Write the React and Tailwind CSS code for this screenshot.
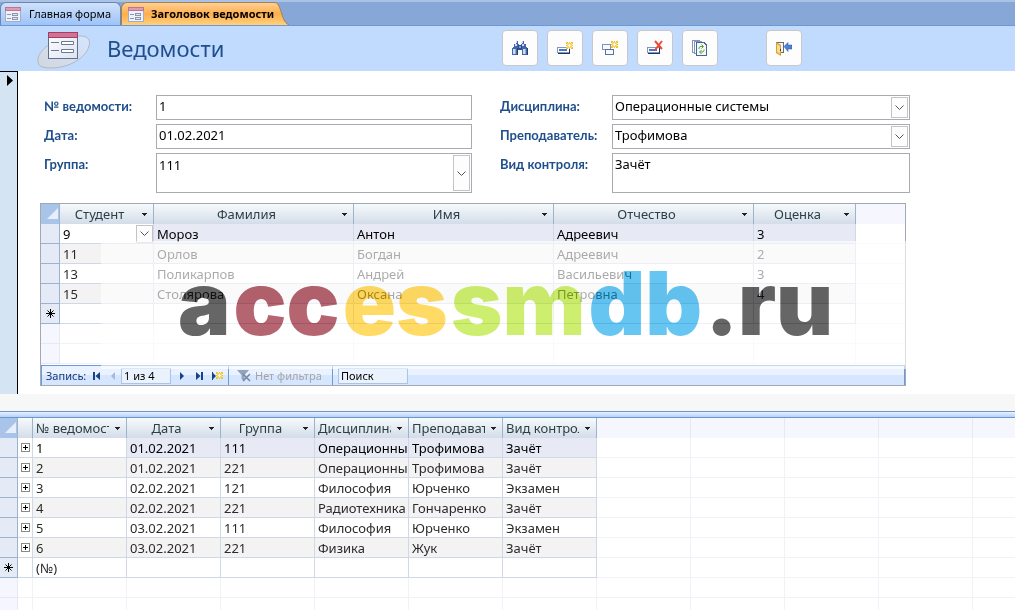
import { clsx } from 'clsx'

const students = [
  { id: '9', last: 'Мороз', first: 'Антон', middle: 'Адреевич', grade: '3' },
  { id: '11', last: 'Орлов', first: 'Богдан', middle: 'Адреевич', grade: '2' },
  { id: '13', last: 'Поликарпов', first: 'Андрей', middle: 'Васильевич', grade: '3' },
  { id: '15', last: 'Столярова', first: 'Оксана', middle: 'Петровна', grade: '4' },
]

const sheets = [
  ['1', '01.02.2021', '111', 'Операционные системы', 'Трофимова', 'Зачёт'],
  ['2', '01.02.2021', '221', 'Операционные системы', 'Трофимова', 'Зачёт'],
  ['3', '02.02.2021', '121', 'Философия', 'Юрченко', 'Экзамен'],
  ['4', '02.02.2021', '221', 'Радиотехника', 'Гончаренко', 'Зачёт'],
  ['5', '03.02.2021', '111', 'Философия', 'Юрченко', 'Экзамен'],
  ['6', '03.02.2021', '221', 'Физика', 'Жук', 'Зачёт'],
]

const sheetColumns = ['№ ведомости', 'Дата', 'Группа', 'Дисциплина', 'Преподаватель', 'Вид контроля']

function FormIcon() {
  return (
    <svg width="16" height="15" viewBox="0 0 16 15" shapeRendering="crispEdges" className="shrink-0" aria-hidden="true">
      <rect x="0" y="0" width="16" height="15" fill="#a3adc6" />
      <rect x="1" y="4" width="14" height="10" fill="#eef1f8" />
      <rect x="0" y="0" width="16" height="4" fill="#c0748f" />
      <rect x="1" y="1" width="14" height="2" fill="#dc9db2" />
      <path d="M2 7h4v1H2zM2 11h4v1H2z" fill="#8d96b0" />
      <path d="M7 6h6v3H7zM7 10h6v3H7z" fill="#8d96b0" />
      <path d="M8 7h4v1H8zM8 11h4v1H8z" fill="#dfe5f2" />
    </svg>
  )
}

function LogoIcon() {
  return (
    <svg width="56" height="37" viewBox="0 0 56 37" className="mt-1" aria-hidden="true">
      <defs>
        <linearGradient id="disc" x1="0" y1="1" x2="1" y2="0">
          <stop offset="0" stopColor="#d3d6dc" />
          <stop offset="1" stopColor="#d4e6ff" />
        </linearGradient>
        <linearGradient id="sheet" x1="0" y1="0" x2="1" y2="1">
          <stop offset="0" stopColor="#ffffff" />
          <stop offset="1" stopColor="#dde3f0" />
        </linearGradient>
      </defs>
      <path
        d="M1 29C0 20 15 5 40 4c11-1 14 4 12 10-3 12-20 22-38 22C5 36 1 34 1 29z"
        fill="url(#disc)"
        stroke="#b3b8c2"
      />
      <rect x="11.5" y="0.5" width="29" height="26" fill="url(#sheet)" stroke="#5f6f92" />
      <rect x="11" y="0" width="30" height="6" fill="#a23f66" />
      <rect x="12" y="1" width="28" height="4" fill="#d27396" />
      <path d="M14 10.5h8M14 18.5h8" stroke="#6c7896" />
      <path d="M24.500 9.500h12v3h-12zM24.500 17.500h12v3h-12z" fill="#fff" stroke="#6c7896" />
    </svg>
  )
}

function Spark({ x = 0, y = 0 }) {
  return (
    <g transform={`translate(${x} ${y})`}>
      <path d="M3 0h1v7H3zM0 3h7v1H0zM0 0h2v2H0zM5 0h2v2H5zM0 5h2v2H0zM5 5h2v2H5z" fill="#eec02f" />
      <path d="M1 1h5v5H1z" fill="#f6d65c" />
      <path d="M3 2h1v3H3zM2 3h3v1H2z" fill="#fffbe0" />
    </g>
  )
}

function RecordBar() {
  return (
    <>
      <path d="M0 7h13v6H0z" fill="#8796b3" />
      <path d="M1 8h11v4H1z" fill="#fff" />
      <path d="M2 9h8v2H2z" fill="#3f78d8" />
      <path d="M12 7h1v6H12zM1 13h12v1H1z" fill="#1f3768" />
    </>
  )
}

const icons = {
  find: (
    <>
      <path d="M4 1h2v3H4zM10 1h2v3H10zM2 4h5v3H2zM9 4h5v3H9zM0 8h6v7H0zM1 7h5v1H1zM10 8h6v7H10zM10 7h5v1H10z" fill="#4468a6" />
      <path d="M6 5h4v5H6z" fill="#2c4f8f" />
      <path d="M7 6h2v2H7z" fill="#7f9fd0" />
      <path d="M4 1h1v2H4zM10 1h1v2h-1zM3 4h2v2H3zM10 4h2v2h-2zM1 9h2v5H1zM11 9h2v5H11z" fill="#cbdcf4" />
      <path d="M3 9h1v5H3zM13 9h1v5H13z" fill="#8dadde" />
      <path d="M5 8h1v7H5zM15 8h1v7H15z" fill="#23427c" />
    </>
  ),
  add: (
    <>
      <RecordBar />
      <Spark x={9} y={2} />
    </>
  ),
  duplicate: (
    <>
      <path d="M0 4h9v6H0z" fill="#7d93b5" />
      <path d="M1 5h7v4H1z" fill="#f6f9ff" />
      <path d="M3 9h9v6H3z" fill="#5b7399" />
      <path d="M4 10h7v4H4z" fill="#f6f9ff" />
      <Spark x={9} y={1} />
    </>
  ),
  remove: (
    <>
      <RecordBar />
      <path d="M8 1l7 8M15 1L8 10" stroke="#f04a34" strokeWidth="2" shapeRendering="auto" />
    </>
  ),
  refresh: (
    <>
      <path d="M0 0h8v13H0z" fill="#8296b8" />
      <path d="M1 1h7v11H1z" fill="#fff" />
      <path d="M2 1h8v13H2z" fill="#8296b8" />
      <path d="M3 2h7v11H3z" fill="#fff" />
      <path d="M4 2h8l3 3v11H4z" fill="#4a6491" />
      <path d="M5 3h6l3 3v9H5z" fill="#f3f7fd" />
      <path d="M7 9V8l1-1.500h3M9.500 4.500l2 2-2 2M12 9.500v1L11 12H8M9.500 10l-2 2 2 2" fill="none" stroke="#5fa32c" shapeRendering="auto" />
    </>
  ),
  exit: (
    <>
      <path d="M0 2h8v11H0z" fill="#6b6b6b" />
      <path d="M1 3h6v9H1z" fill="#f3f6fb" />
      <path d="M0 2l5 3v11l-5-3z" fill="#d89f36" shapeRendering="auto" />
      <path d="M1 4l3 2v8l-3-2z" fill="#f8dc8e" shapeRendering="auto" />
      <path d="M4 9h1v2H4z" fill="#5c4210" />
      <path d="M8 6.500L12 2.500v2.500h4v4h-4v2.500z" fill="#4b82da" stroke="#2552a4" strokeWidth="0.500" shapeRendering="auto" />
    </>
  ),
}

const commands = [
  { icon: 'find', label: 'Найти' },
  { icon: 'add', label: 'Добавить запись' },
  { icon: 'duplicate', label: 'Дублировать запись' },
  { icon: 'remove', label: 'Удалить запись' },
  { icon: 'refresh', label: 'Обновить' },
]

function ToolButton({ icon, label }) {
  return (
    <button
      type="button"
      aria-label={label}
      className="flex size-9 items-center justify-center rounded-[4px] border border-[#c8c8cc] bg-[#fdfdfd]"
    >
      <svg width="16" height="16" viewBox="0 0 16 16" shapeRendering="crispEdges" aria-hidden="true">
        {icons[icon]}
      </svg>
    </button>
  )
}

function Chevron() {
  return (
    <svg width="9" height="5" viewBox="0 0 9 5" fill="none" stroke="#555" aria-hidden="true">
      <path d="M0.500 0.500l4 4 4-4" />
    </svg>
  )
}

function DropMark() {
  return (
    <svg width="5" height="3" viewBox="0 0 5 3" shapeRendering="crispEdges" className="shrink-0" aria-hidden="true">
      <path d="M0 0h5v1H0zM1 1h3v1H1zM2 2h1v1H2z" fill="#222" />
    </svg>
  )
}

function Field({ id, label, value, tall, list, multiline }) {
  const box = clsx(
    'block w-full resize-none appearance-none border border-[#a9abb0] bg-white px-0.5 leading-4 text-black outline-none',
    tall ? 'h-10' : 'h-[25px] pb-1',
    tall && (multiline ? 'pt-0.5' : 'pb-4'),
  )
  return (
    <div className="flex items-start">
      <label htmlFor={id} className="w-28 shrink-0 pt-0.5 font-['Lato',sans-serif] leading-[18px] font-bold text-[#1f4e8c]">
        {label}
      </label>
      <div className="relative flex-1">
        {list && (
          <select id={id} className={box} defaultValue={value}>
            <option>{value}</option>
          </select>
        )}
        {multiline && <textarea id={id} className={box} defaultValue={value} />}
        {!list && !multiline && <input id={id} type="text" className={box} defaultValue={value} />}
        {list && (
          <span className="pointer-events-none absolute inset-y-0.5 right-0.5 flex w-[17px] items-center justify-center border border-[#c4c4c8] bg-[#fdfdfd]">
            <Chevron />
          </span>
        )}
      </div>
    </div>
  )
}

function HeadCell({ children }) {
  return (
    <th className="border-r border-[#9db3cb] bg-linear-to-b from-[#f6fafb] to-[#d3dce9] p-0 font-normal">
      <div className="flex h-5 items-center gap-1.5 pr-1.5 pl-[3px]">
        <span className="flex-1 overflow-hidden text-center whitespace-nowrap text-[#2b3f46]">{children}</span>
        <DropMark />
      </div>
    </th>
  )
}

function CornerCell() {
  return (
    <th className="border-r border-[#9db3cb] bg-[#a9c4e9] p-0">
      <svg width="12" height="12" viewBox="0 0 12 12" className="ml-auto" aria-hidden="true">
        <path d="M11 0v11H0z" fill="#e6effb" />
      </svg>
    </th>
  )
}

function Star() {
  return (
    <svg width="9" height="9" viewBox="0 0 9 9" stroke="#000" className="mx-auto" aria-hidden="true">
      <path d="M4.500 0v9M0 4.500h9M1.500 1.500l6 6M7.500 1.500l-6 6" />
    </svg>
  )
}

const rowHead = 'h-5 border-r border-b border-[#9db3cb] bg-[#e4ebf6] p-0'
const emptyHead = 'h-5 border-r border-b border-[#e6e9f4] bg-[#f6f7fe] p-0'
const cell = 'h-5 overflow-hidden border-r border-b border-[#d0d7e5] p-0 pl-[3px] whitespace-nowrap'
const emptyCell = 'h-5 border-r border-b border-[#f1f2f7] p-0'

function StudentsGrid() {
  return (
    <table className="w-full table-fixed border-separate border-spacing-0 text-[#2b2b2b]">
      <colgroup>
        <col className="w-[19px]" />
        <col className="w-[94px]" />
        <col className="w-[200px]" />
        <col className="w-[200px]" />
        <col className="w-[200px]" />
        <col className="w-[102px]" />
        <col />
      </colgroup>
      <thead>
        <tr>
          <CornerCell />
          <HeadCell>Студент</HeadCell>
          <HeadCell>Фамилия</HeadCell>
          <HeadCell>Имя</HeadCell>
          <HeadCell>Отчество</HeadCell>
          <HeadCell>Оценка</HeadCell>
          <td className="bg-[#f6f7fe]" />
        </tr>
      </thead>
      <tbody>
        {students.map((s, i) => {
          const tone = i === 0 ? 'bg-[#e7eaf5] text-black' : i % 2 ? 'bg-[#f3f3f3]' : 'bg-white'
          return (
            <tr key={s.id}>
              <th className={rowHead} />
              <td className={clsx(cell, i === 0 ? 'bg-white text-black' : tone)}>
                {i === 0 ? (
                  <div className="relative">
                    <select aria-label="Студент" defaultValue={s.id} className="block w-full appearance-none outline-none">
                      <option>{s.id}</option>
                    </select>
                    <span className="pointer-events-none absolute inset-y-0 right-0 flex w-[17px] items-center justify-center border border-[#c4c4c8] bg-[#fdfdfd]">
                      <Chevron />
                    </span>
                  </div>
                ) : (
                  s.id
                )}
              </td>
              <td className={clsx(cell, tone)}>{s.last}</td>
              <td className={clsx(cell, tone)}>{s.first}</td>
              <td className={clsx(cell, tone)}>{s.middle}</td>
              <td className={clsx(cell, tone)}>{s.grade}</td>
              <td className={clsx(emptyCell, 'border-r-0')} />
            </tr>
          )
        })}
        <tr>
          <th className={rowHead}>
            <Star />
          </th>
          {[0, 1, 2, 3, 4].map((c) => (
            <td key={c} className={cell} />
          ))}
          <td className={clsx(emptyCell, 'border-r-0')} />
        </tr>
        {[0, 1].map((r) => (
          <tr key={r}>
            <th className={emptyHead} />
            {[0, 1, 2, 3, 4].map((c) => (
              <td key={c} className={emptyCell} />
            ))}
            <td className={clsx(emptyCell, 'border-r-0')} />
          </tr>
        ))}
      </tbody>
    </table>
  )
}

function NavButton({ label, children, className, disabled }) {
  return (
    <button type="button" aria-label={label} disabled={disabled} className={clsx('flex h-full items-center justify-center', className)}>
      {children}
    </button>
  )
}

function RecordNavigator() {
  return (
    <div className="flex h-5 items-center border border-b-0 border-[#6b9ad4] bg-linear-to-b from-[#e9f2fe] from-50% to-[#d5e6fe] to-50% text-[11px] leading-4 text-[#15387a]">
      <span className="w-[46px] shrink-0 pl-1">Запись:</span>
      <NavButton label="Первая запись" className="w-4">
        <svg width="7" height="8" viewBox="0 0 7 8" fill="#15428b">
          <path d="M0 0h2v8H0zM7 0v8L2.500 4z" />
        </svg>
      </NavButton>
      <NavButton label="Предыдущая запись" className="w-[17px]" disabled>
        <svg width="4" height="8" viewBox="0 0 4 8" fill="#a3b9dd">
          <path d="M4 0v8L0 4z" />
        </svg>
      </NavButton>
      <input
        type="text"
        aria-label="Текущая запись"
        defaultValue="1 из 4"
        className="h-4 w-[50px] border border-[#a9c3e6] bg-[#eaf2fd] px-0.5 text-black outline-none"
      />
      <NavButton label="Следующая запись" className="w-[21px]">
        <svg width="4" height="8" viewBox="0 0 4 8" fill="#15428b">
          <path d="M0 0v8l4-4z" />
        </svg>
      </NavButton>
      <NavButton label="Последняя запись" className="w-3.5">
        <svg width="7" height="8" viewBox="0 0 7 8" fill="#15428b">
          <path d="M5 0h2v8H5zM0 0v8l4.500-4z" />
        </svg>
      </NavButton>
      <NavButton label="Новая запись" className="w-[22px]">
        <svg width="11" height="8" viewBox="0 0 11 8" fill="#15428b">
          <path d="M0 0h1v8H0zM1 1v6l3-3z" />
          <Spark x={4} y={0} />
        </svg>
      </NavButton>
      <button type="button" disabled className="flex h-full w-[105px] items-center gap-1 border-x border-[#6b9ad4] pl-2 whitespace-nowrap text-[#a5a5a5]">
        <svg width="14" height="12" viewBox="0 0 14 12" aria-hidden="true">
          <path d="M0 0h12L7.500 5v6l-3-2V5z" fill="#93a3bd" />
          <path d="M6 4l7 7M13 4l-7 7" stroke="#76869f" strokeWidth="1.500" />
        </svg>
        Нет фильтра
      </button>
      <input
        type="text"
        aria-label="Поиск"
        defaultValue="Поиск"
        className="ml-[5px] h-4 w-[70px] border border-[#a9c3e6] bg-[#eaf2fd] px-0.5 text-black outline-none"
      />
    </div>
  )
}

// The wordmark is blended by difference, so each colour is the inverse of the one seen on white.
function Watermark() {
  return (
    <>
      <div className="pointer-events-none absolute top-[37px] -right-px left-[60px] h-32 bg-white/60" />
      <p className="pointer-events-none absolute top-[53px] left-[137px] flex gap-[3px] font-['Inter','DejaVu_Sans',sans-serif] text-[88px] leading-[92px] font-black text-[#999] mix-blend-difference">
        <span>a</span>
        <span className="text-[#4a9a8f]">cc</span>
        <span className="text-[#002499]">es</span>
        <span className="text-[#321191]">sm</span>
        <span className="text-[#993a0e]">db</span>
        <span>.ru</span>
      </p>
    </>
  )
}

function Subform() {
  return (
    <div className="relative mt-2.5 max-w-[866px] border border-[#a3a9b3] leading-[18px]">
      <StudentsGrid />
      <div className="h-px" />
      <RecordNavigator />
      <Watermark />
    </div>
  )
}

function ExpandBox({ label }) {
  return (
    <button type="button" aria-label={label} className="mx-auto flex size-[9px] items-center justify-center border border-[#8a8a8a] bg-white">
      <svg width="5" height="5" viewBox="0 0 5 5" shapeRendering="crispEdges" aria-hidden="true">
        <path d="M2 0h1v5H2zM0 2h5v1H0z" fill="#000" />
      </svg>
    </button>
  )
}

function SheetsGrid() {
  const spare = [0, 1, 2, 3, 4]
  return (
    <table className="w-full table-fixed border-separate border-spacing-0 font-['Noto_Sans',sans-serif] text-[13px] leading-[18px] text-[#2b2b2b]">
      <colgroup>
        <col className="w-[18px]" />
        <col className="w-[15px]" />
        {sheetColumns.map((c) => (
          <col key={c} className="w-[94px]" />
        ))}
        {spare.map((c) => (
          <col key={c} className={c < 4 ? 'w-[94px]' : ''} />
        ))}
      </colgroup>
      <thead>
        <tr>
          <CornerCell />
          <td className="border-r border-[#9db3cb] bg-linear-to-b from-[#f6fafb] to-[#d3dce9]" />
          {sheetColumns.map((c) => (
            <HeadCell key={c}>{c}</HeadCell>
          ))}
          {spare.map((c) => (
            <td key={c} className="border-r border-[#e6e9f4] bg-[#f6f7fe] last:border-r-0" />
          ))}
        </tr>
      </thead>
      <tbody>
        {sheets.map((row, i) => (
          <tr key={row[0]}>
            <th className={rowHead} />
            <td className="border-r border-b border-[#d0d7e5] p-0">
              <ExpandBox label={`Развернуть ${row[0]}`} />
            </td>
            {row.map((value, c) => (
              <td
                key={c}
                className={clsx(
                  cell,
                  i === 0 && 'text-black',
                  i === 0 && c > 0 && 'bg-[#e7eaf5]',
                  i % 2 === 1 && 'bg-[#f3f3f3]',
                )}
              >
                {value}
              </td>
            ))}
            {spare.map((c) => (
              <td key={c} className={clsx(emptyCell, 'last:border-r-0')} />
            ))}
          </tr>
        ))}
        <tr>
          <th className={rowHead}>
            <Star />
          </th>
          <td className="border-r border-b border-[#d0d7e5] p-0" />
          {sheetColumns.map((c, i) => (
            <td key={c} className={cell}>
              {i === 0 && '(№)'}
            </td>
          ))}
          {spare.map((c) => (
            <td key={c} className={clsx(emptyCell, 'last:border-r-0')} />
          ))}
        </tr>
        {[0, 1].map((r) => (
          <tr key={r}>
            <th className={emptyHead} />
            <td className={emptyCell} />
            {[...sheetColumns, ...spare].map((c) => (
              <td key={c} className={clsx(emptyCell, 'last:border-r-0')} />
            ))}
          </tr>
        ))}
      </tbody>
    </table>
  )
}

function Tabs() {
  return (
    <nav className="flex h-[26px] items-end border-t-2 border-b border-t-[#a9c2e6] border-b-[#6d98d3] bg-[#87a8d7] font-['Noto_Sans',sans-serif] text-[11px] text-black">
      <button
        type="button"
        className="flex h-full w-[121px] items-center gap-2 rounded-t-md border border-b-0 border-[#6a86b3] bg-linear-to-b from-[#cfe1fb] to-[#9dc3f8] pl-1 whitespace-nowrap"
      >
        <FormIcon />
        Главная форма
      </button>
      <button type="button" className="flex h-full items-center font-bold whitespace-nowrap">
        <span className="flex h-full items-center gap-[7px] rounded-tl-md border border-r-0 border-b-0 border-[#a08150] bg-linear-to-b from-[#ffcf93] via-[#ffae4b] to-[#ffd07c] pl-1.5">
          <FormIcon />
          Заголовок ведомости
        </span>
        <svg width="16" height="23" viewBox="0 0 16 23" className="shrink-0" aria-hidden="true">
          <defs>
            <linearGradient id="tabEnd" x1="0" y1="0" x2="0" y2="1">
              <stop offset="0" stopColor="#ffcf93" />
              <stop offset="0.500" stopColor="#ffae4b" />
              <stop offset="1" stopColor="#ffd07c" />
            </linearGradient>
          </defs>
          <path d="M0 0.500c4 0 5 3 7 9s3 11 8 13.500H0z" fill="url(#tabEnd)" />
          <path d="M0 0.500c4 0 5 3 7 9s3 11 8 13.500" fill="none" stroke="#a08150" />
        </svg>
      </button>
    </nav>
  )
}

export default function App() {
  return (
    <div className="flex h-screen flex-col overflow-hidden bg-white">
      <Tabs />
      <header className="flex h-[45px] shrink-0 items-center bg-[#c1dbff] pb-px pl-[37px]">
        <LogoIcon />
        <h1 className="w-[409px] pl-3.5 font-['Noto_Sans',sans-serif] text-[22px] leading-8 text-[#1f4e8c]">Ведомости</h1>
        <div className="flex gap-[9px]">
          {commands.map((c) => (
            <ToolButton key={c.icon} {...c} />
          ))}
        </div>
        <div className="ml-12">
          <ToolButton icon="exit" label="Закрыть форму" />
        </div>
      </header>

      <main className="flex shrink-0">
        <div className="w-[18px] shrink-0 border-t border-r border-black bg-[#d5e4f3] pt-[3px] pl-[7px]">
          <svg width="6" height="11" viewBox="0 0 6 11" aria-hidden="true">
            <path d="M0 0l6 5.500L0 11z" fill="#000" />
          </svg>
        </div>
        <div className="min-w-0 flex-1 pt-6 pb-2 pl-[22px] font-['Noto_Sans',sans-serif] text-[13px]">
          <form className="grid max-w-[870px] grid-cols-[428px_minmax(0,1fr)] gap-x-7 pl-1">
            <div className="flex flex-col gap-1">
              <Field id="number" label="№ ведомости:" value="1" />
              <Field id="date" label="Дата:" value="01.02.2021" />
              <Field id="group" label="Группа:" value="111" tall list />
            </div>
            <div className="flex flex-col gap-1">
              <Field id="subject" label="Дисциплина:" value="Операционные системы" list />
              <Field id="teacher" label="Преподаватель:" value="Трофимова" list />
              <Field id="control" label="Вид контроля:" value="Зачёт" tall multiline />
            </div>
          </form>
          <Subform />
        </div>
      </main>

      <div className="h-[17px] shrink-0 bg-[#f7f7f7]" />
      <div className="h-[7px] shrink-0 border-y border-[#7096c8] bg-linear-to-b from-[#e9f2ff] to-[#b3d1fc]" />
      <section className="min-h-0 flex-1 overflow-hidden">
        <SheetsGrid />
      </section>
    </div>
  )
}
